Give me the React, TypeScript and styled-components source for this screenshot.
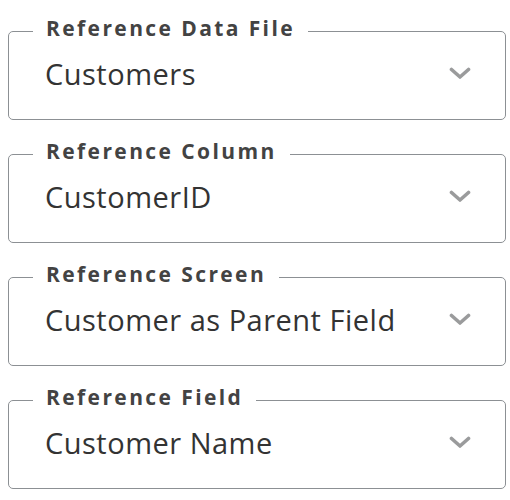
import React from 'react'
import styled, { createGlobalStyle } from 'styled-components'

const Global = createGlobalStyle`
  body {
    margin: 0;
    background: #fff;
    font-family: "Open Sans", Lato, sans-serif;
  }
`

const Stack = styled.div`
  display: flex;
  flex-direction: column;
  gap: 17px;
  padding: 14px 4px 0 8px;
`

const Box = styled.fieldset`
  margin: 0;
  padding: 0 24px 14px 24px;
  border: 1.5px solid #8c9094;
  border-radius: 5px;
  min-width: 0;
`

const Legend = styled.legend`
  padding: 0 13px 6px;
  font-size: 21px;
  line-height: 28px;
  font-weight: 700;
  letter-spacing: 2.4px;
  color: #434343;
`

const Row = styled.div`
  box-sizing: border-box;
  display: flex;
  align-items: center;
  justify-content: space-between;
  height: 57px;
  padding: 0 10px 6px 12px;
`

const Value = styled.span`
  font-size: 29px;
  letter-spacing: 0.5px;
  color: #333;
`

const Chevron = () => (
  <svg width="22" height="13" viewBox="0 0 22 13">
    <path d="M2.5 2.5 L11 10 L19.5 2.5" fill="none" stroke="#9a9b9c" strokeWidth="3.6" strokeLinecap="round" strokeLinejoin="round" />
  </svg>
)

const fields = [
  { label: 'Reference Data File', value: 'Customers' },
  { label: 'Reference Column', value: 'CustomerID' },
  { label: 'Reference Screen', value: 'Customer as Parent Field' },
  { label: 'Reference Field', value: 'Customer Name' },
]

const App: React.FC = () => {
  return (
    <>
      <Global />
      <Stack>
        {fields.map(f => (
          <Box key={f.label}>
            <Legend>{f.label}</Legend>
            <Row>
              <Value>{f.value}</Value>
              <Chevron />
            </Row>
          </Box>
        ))}
      </Stack>
    </>
  )
}

export default App
